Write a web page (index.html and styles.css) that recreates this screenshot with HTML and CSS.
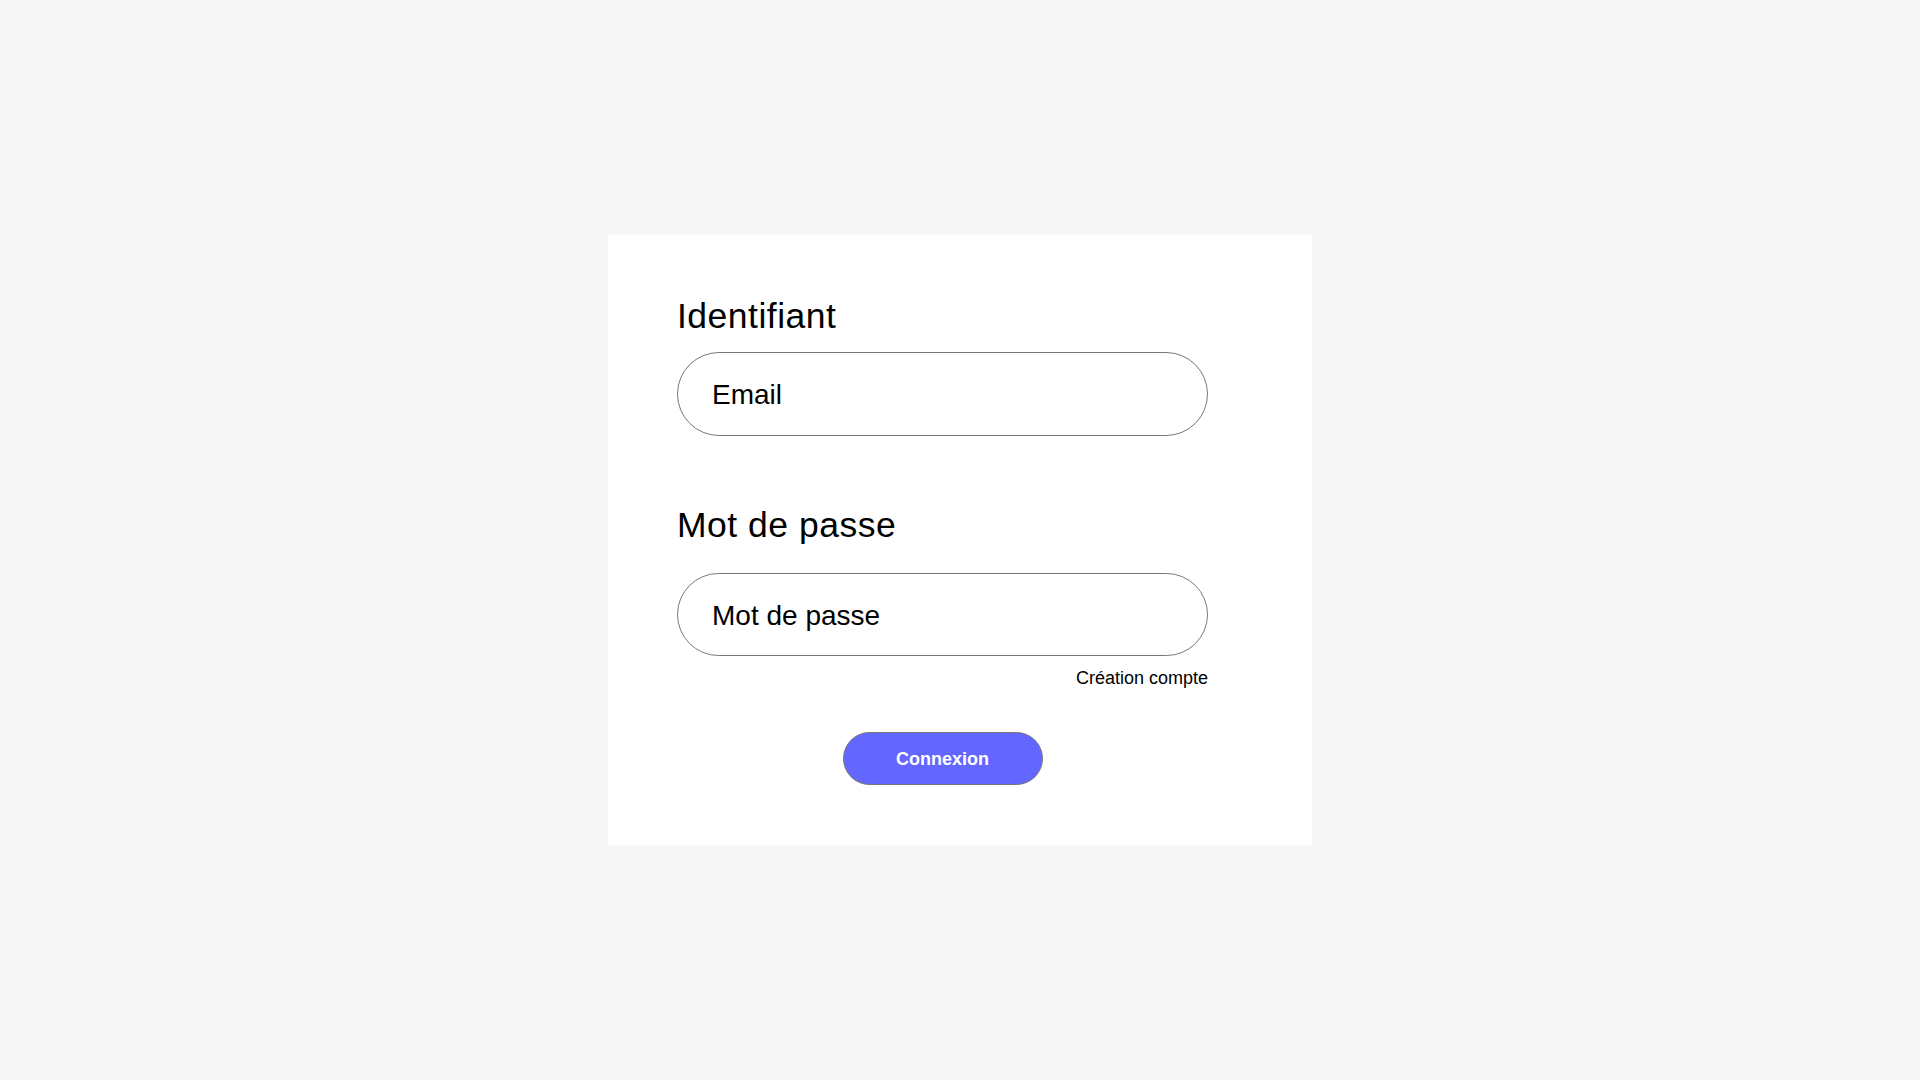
FILE: index.html
```html
<!DOCTYPE html>
<html lang="fr">
<head>
<meta charset="utf-8">
<title>Connexion</title>
<link rel="stylesheet" href="styles.css">
</head>
<body>
<main class="page">
  <form class="card">
    <label class="label label-first" for="email">Identifiant</label>
    <input class="field" id="email" type="text" placeholder="Email">
    <label class="label label-second" for="pwd">Mot de passe</label>
    <input class="field" id="pwd" type="password" placeholder="Mot de passe">
    <a class="create" href="#">Création compte</a>
    <div class="actions">
      <button class="btn" type="button">Connexion</button>
    </div>
  </form>
</main>
</body>
</html>
```

FILE: styles.css
```css
* { box-sizing: border-box; }
html, body {
  margin: 0;
  padding: 0;
  height: 100%;
}
body {
  background: #f7f7f7;
  font-family: "Liberation Sans", Arial, Helvetica, sans-serif;
  color: #000;
}
.page {
  height: 100vh;
  display: flex;
  align-items: center;
  justify-content: center;
}
.card {
  width: 704px;
  height: 610px;
  background: #fff;
  padding: 61px 104px 60px 69px;
  display: flex;
  flex-direction: column;
}
.label {
  font-size: 35.5px;
  letter-spacing: 0.5px;
  line-height: 40px;
  display: block;
}
.label-first { margin: 0 0 16px 0; }
.label-second { margin: 69px 0 28px 0; }
.field {
  width: 531px;
  height: 84px;
  border: 1px solid #777;
  border-radius: 42px;
  padding: 3px 0 0 34px;
  font-family: "Liberation Sans", Arial, Helvetica, sans-serif;
  font-size: 28px;
  color: #000;
  background: #fff;
  outline: none;
}
.field::placeholder { color: #000; opacity: 1; }
.create {
  align-self: flex-end;
  margin-top: 12px;
  font-size: 18px;
  line-height: 21px;
  color: #000;
  text-decoration: none;
}
.actions {
  display: flex;
  justify-content: center;
  margin-top: 43px;
}
.btn {
  width: 200px;
  height: 53px;
  border: 1px solid #777;
  border-radius: 27px;
  background: #6366ff;
  color: #fff;
  font-family: "Liberation Sans", Arial, Helvetica, sans-serif;
  font-weight: bold;
  font-size: 18px;
  padding: 1px 0 0 0;
  cursor: pointer;
}
```
